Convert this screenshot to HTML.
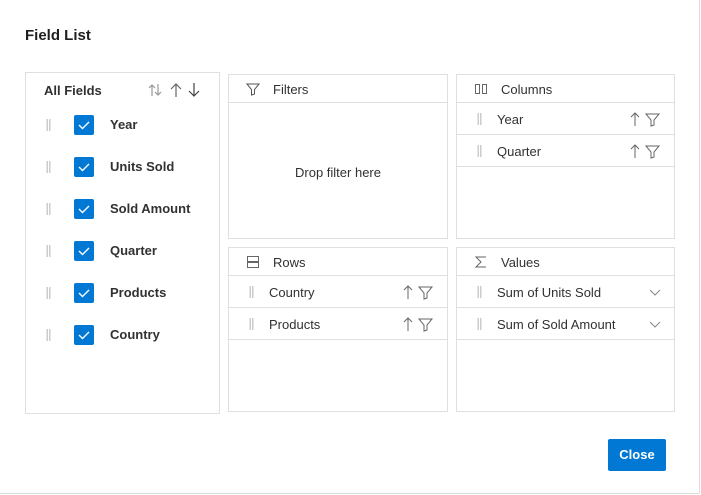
<!DOCTYPE html>
<html><head><style>
*{box-sizing:border-box;margin:0;padding:0}
body{width:701px;height:495px;background:#fff;font-family:"Liberation Sans",sans-serif;position:relative;overflow:hidden;color:#323130}
.dlg{position:absolute;left:0;top:0;width:700px;height:494px;border:1px solid #e1dfdd;border-top:none;border-left:none}
.title{position:absolute;left:25px;top:27px;font-size:15px;font-weight:bold;color:#201f1e}
.box{position:absolute;border:1px solid #e1dfdd;background:#fff}
.hd{height:28px;border-bottom:1px solid #e1dfdd;font-size:13px;line-height:29px;padding-left:44px;position:relative}
.hd svg{position:absolute;left:17px;top:7px}
.row{height:32px;border-bottom:1px solid #e1dfdd;font-size:13px;line-height:33px;padding-left:40px;position:relative}
.grip{position:absolute;width:5px;height:12px;background-image:radial-gradient(#999 45%,transparent 50%);background-size:2.5px 2px}
.row .grip{left:20px;top:10px}
.ic{position:absolute;right:12px;top:8px}
.cb{position:absolute;left:48px;width:20px;height:20px;background:#0078d4;border-radius:2px}
.fl{position:absolute;font-size:13px;font-weight:bold;left:84px}
</style></head><body>
<div class="dlg"></div>
<div class="title">Field List</div>

<div class="box" style="left:25px;top:72px;width:195px;height:342px">
 <div style="position:absolute;left:18px;top:10px;font-size:13px;font-weight:bold">All Fields</div>
 <svg style="position:absolute;left:122px;top:9px" width="60" height="16" viewBox="0 0 60 16" fill="none" stroke-width="1.2">
  <path d="M4 14V3M1 6l3-3 3 3M10 2v11M7 10l3 3 3-3" stroke="#999"/>
  <path d="M28 15V2M23 7l5-5 5 5" stroke="#666"/>
  <path d="M46 1v13M41 9l5 5 5-5" stroke="#444"/>
 </svg>
 <div class="grip" style="left:20px;top:46px"></div><div class="cb" style="top:42px"><svg width="20" height="20"><path d="M5 10l3.5 3.5L15 7" stroke="#fff" stroke-width="1.4" fill="none"/></svg></div><div class="fl" style="top:44px">Year</div>
 <div class="grip" style="left:20px;top:88px"></div><div class="cb" style="top:84px"><svg width="20" height="20"><path d="M5 10l3.5 3.5L15 7" stroke="#fff" stroke-width="1.4" fill="none"/></svg></div><div class="fl" style="top:86px">Units Sold</div>
 <div class="grip" style="left:20px;top:130px"></div><div class="cb" style="top:126px"><svg width="20" height="20"><path d="M5 10l3.5 3.5L15 7" stroke="#fff" stroke-width="1.4" fill="none"/></svg></div><div class="fl" style="top:128px">Sold Amount</div>
 <div class="grip" style="left:20px;top:172px"></div><div class="cb" style="top:168px"><svg width="20" height="20"><path d="M5 10l3.5 3.5L15 7" stroke="#fff" stroke-width="1.4" fill="none"/></svg></div><div class="fl" style="top:170px">Quarter</div>
 <div class="grip" style="left:20px;top:214px"></div><div class="cb" style="top:210px"><svg width="20" height="20"><path d="M5 10l3.5 3.5L15 7" stroke="#fff" stroke-width="1.4" fill="none"/></svg></div><div class="fl" style="top:212px">Products</div>
 <div class="grip" style="left:20px;top:256px"></div><div class="cb" style="top:252px"><svg width="20" height="20"><path d="M5 10l3.5 3.5L15 7" stroke="#fff" stroke-width="1.4" fill="none"/></svg></div><div class="fl" style="top:254px">Country</div>
</div>

<div class="box" style="left:228px;top:74px;width:220px;height:165px">
 <div class="hd"><svg width="14" height="14" fill="none" stroke="#555"><path d="M1 2h12L8.5 7.5V12L5.5 13V7.5z"/></svg>Filters</div>
 <div style="text-align:center;font-size:13px;margin-top:62px">Drop filter here</div>
</div>

<div class="box" style="left:456px;top:74px;width:219px;height:165px">
 <div class="hd"><svg width="14" height="14" fill="none" stroke="#666"><rect x="1.5" y="2.5" width="4" height="9"/><rect x="8.5" y="2.5" width="4" height="9"/></svg>Columns</div>
 <div class="row"><div class="grip"></div>Year<svg class="ic" width="32" height="16" fill="none" stroke="#666"><path d="M5 15V2M1 6l4-4 4 4M16 3h13l-5 6v5l-3 1V9z"/></svg></div>
 <div class="row"><div class="grip"></div>Quarter<svg class="ic" width="32" height="16" fill="none" stroke="#666"><path d="M5 15V2M1 6l4-4 4 4M16 3h13l-5 6v5l-3 1V9z"/></svg></div>
</div>

<div class="box" style="left:228px;top:247px;width:220px;height:165px">
 <div class="hd"><svg width="14" height="14" fill="none" stroke="#666"><rect x="1.5" y="1.5" width="11" height="5"/><rect x="1.5" y="7.5" width="11" height="5"/></svg>Rows</div>
 <div class="row"><div class="grip"></div>Country<svg class="ic" width="32" height="16" fill="none" stroke="#666"><path d="M5 15V2M1 6l4-4 4 4M16 3h13l-5 6v5l-3 1V9z"/></svg></div>
 <div class="row"><div class="grip"></div>Products<svg class="ic" width="32" height="16" fill="none" stroke="#666"><path d="M5 15V2M1 6l4-4 4 4M16 3h13l-5 6v5l-3 1V9z"/></svg></div>
</div>

<div class="box" style="left:456px;top:247px;width:219px;height:165px">
 <div class="hd"><svg width="14" height="14" fill="none" stroke="#666"><path d="M12 2H2l5 5-5 5h10"/></svg>Values</div>
 <div class="row"><div class="grip"></div>Sum of Units Sold<svg class="ic" width="14" height="16" fill="none" stroke="#888" style="top:9px"><path d="M2 5l5 5 5-5"/></svg></div>
 <div class="row"><div class="grip"></div>Sum of Sold Amount<svg class="ic" width="14" height="16" fill="none" stroke="#888" style="top:9px"><path d="M2 5l5 5 5-5"/></svg></div>
</div>

<div style="position:absolute;left:608px;top:439px;width:58px;height:32px;background:#0078d4;border-radius:2px;color:#fff;font-size:13px;font-weight:bold;text-align:center;line-height:32px">Close</div>
</body></html>
